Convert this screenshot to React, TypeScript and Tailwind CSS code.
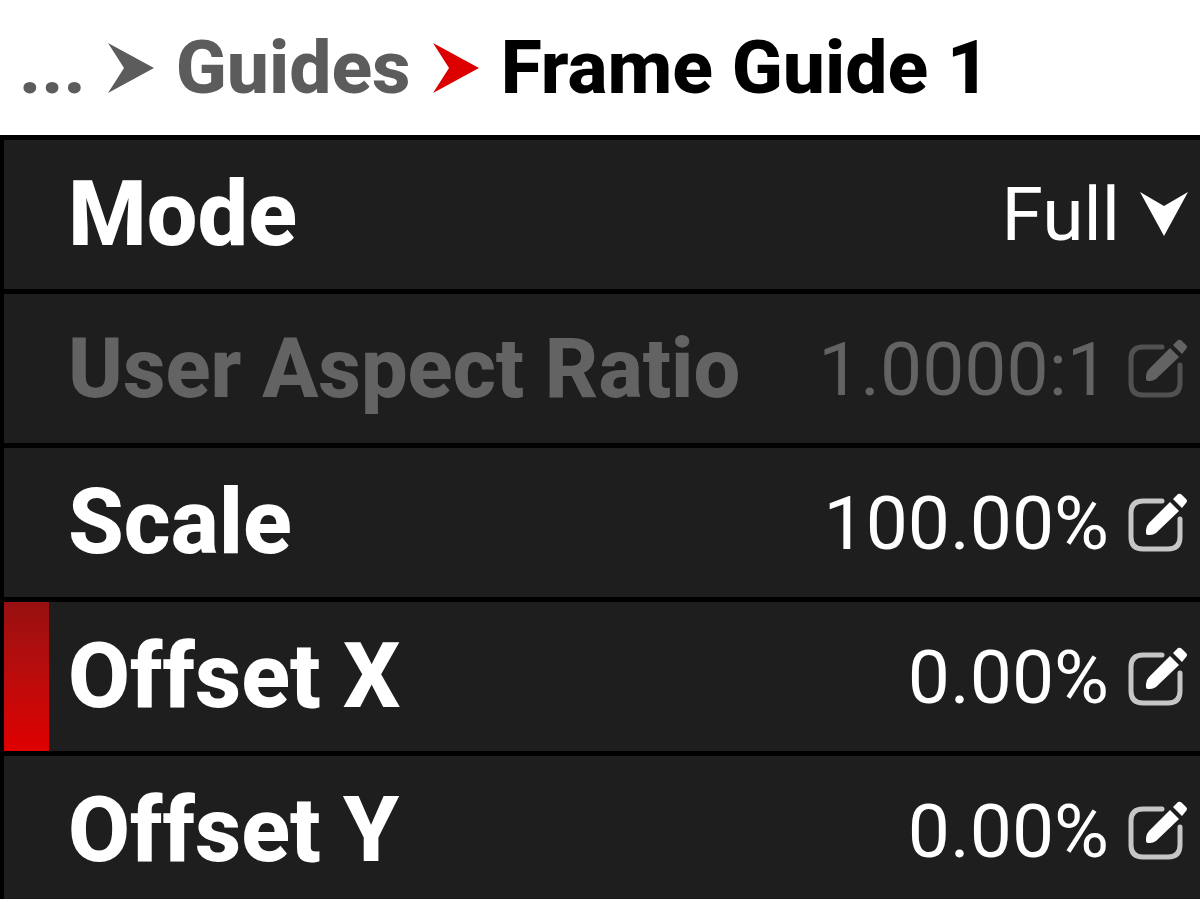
import React from "react";

type Setting = {
  id: string;
  label: string;
  value: string;
  options?: string[];
  disabled?: boolean;
  selected?: boolean;
};

const settings: Setting[] = [
  { id: "mode", label: "Mode", value: "Full", options: ["Full"] },
  { id: "aspect", label: "User Aspect Ratio", value: "1.0000:1", disabled: true },
  { id: "scale", label: "Scale", value: "100.00%" },
  { id: "offset-x", label: "Offset X", value: "0.00%", selected: true },
  { id: "offset-y", label: "Offset Y", value: "0.00%" },
];

function CrumbArrow({ className }: { className: string }) {
  return (
    <svg className={"h-[50px] w-[46px] shrink-0 " + className} viewBox="0 0 46 50" fill="currentColor" aria-hidden="true">
      <path d="M0 0L46 25L0 50L16 25Z" />
    </svg>
  );
}

function DownArrow() {
  return (
    <svg className="h-[46px] w-12 shrink-0" viewBox="0 0 48 46" fill="currentColor" aria-hidden="true">
      <path d="M0 0L24 14L48 0L24 44Z" />
    </svg>
  );
}

function EditIcon() {
  return (
    <svg className="h-[60px] w-[60px]" viewBox="0 0 60 60" aria-hidden="true">
      <path
        d="M34 8H15Q3 8 3 20V44Q3 56 15 56H40Q52 56 52 44V26"
        fill="none"
        stroke="currentColor"
        strokeOpacity="0.75"
        strokeWidth="5"
        strokeLinecap="round"
      />
      <path d="M42 9L51 18L28 40Q25 42 22 42H20Q18 42 18 40V37Q18 33 21 30Z" fill="currentColor" />
      <path d="M45 6L50 1Q52 0 54 2L58 6Q60 8 58 10L54 15Z" fill="currentColor" />
    </svg>
  );
}

function SettingRow({ id, label, value, options, disabled, selected }: Setting) {
  // long labels step down a size so the value still fits
  const labelSize = label.length > 12 ? "text-[83px]" : "text-[90px]";

  return (
    <div className={"flex h-[149px] items-stretch bg-[#1e1e1e] " + (disabled ? "text-[#636363]" : "text-white")}>
      <div className={"w-[45px] shrink-0 " + (selected ? "bg-linear-to-b from-[#981010] to-[#e00000]" : "")} />
      <div className="flex min-w-0 flex-1 items-center pr-3 pl-[19px]">
        <label htmlFor={id} className={"shrink-0 leading-[88px] font-extrabold whitespace-nowrap " + labelSize}>
          {label}
        </label>
        {options ? (
          <>
            <select
              id={id}
              defaultValue={value}
              className="ml-auto field-sizing-content appearance-none bg-transparent text-[75px] leading-none outline-none"
            >
              {options.map((option) => (
                <option key={option}>{option}</option>
              ))}
            </select>
            <span className="ml-5">
              <DownArrow />
            </span>
          </>
        ) : (
          <>
            <input
              id={id}
              type="text"
              defaultValue={value}
              disabled={disabled}
              className="w-0 min-w-0 flex-1 bg-transparent text-right text-[75px] leading-none outline-none"
            />
            <button type="button" disabled={disabled} aria-label={"Edit " + label} className="ml-[19px] shrink-0">
              <EditIcon />
            </button>
          </>
        )}
      </div>
    </div>
  );
}

export default function App() {
  return (
    <main className="h-screen overflow-hidden bg-black font-['Roboto',sans-serif]">
      <nav className="flex h-[135px] items-center gap-[22px] bg-white px-[19px] text-[75px] leading-none font-extrabold whitespace-nowrap text-[#5c5c5c]">
        <a href="#back">...</a>
        <CrumbArrow className="text-[#5c5c5c]" />
        <a href="#guides">Guides</a>
        <CrumbArrow className="text-[#dc0000]" />
        <span className="text-black" aria-current="page">
          Frame Guide 1
        </span>
      </nav>
      <div className="flex flex-col gap-[5px] pt-[5px] pl-1">
        {settings.map((setting) => (
          <SettingRow key={setting.id} {...setting} />
        ))}
      </div>
    </main>
  );
}
